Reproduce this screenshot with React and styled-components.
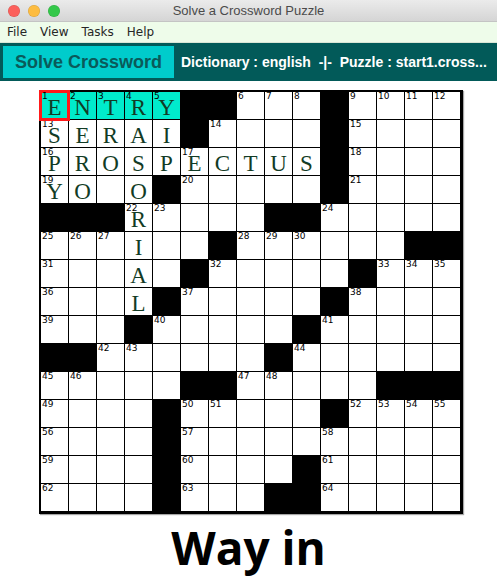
import React from 'react';
import styled, { createGlobalStyle } from 'styled-components';

const GlobalStyle = createGlobalStyle`
    html, body {
        margin: 0;
        padding: 0;
        background: #ffffff;
    }
    body {
        font-family: "Liberation Sans", Arial, sans-serif;
    }
`

const SIZE = 15;

// black squares of the top half, the bottom half is the same rotated
const BLACKS = [
    [0, 5], [0, 6], [0, 10],
    [1, 5], [1, 10],
    [2, 10],
    [3, 4], [3, 10],
    [4, 0], [4, 1], [4, 2], [4, 8], [4, 9],
    [5, 6], [5, 13], [5, 14],
    [6, 5], [6, 11],
    [7, 4], [7, 10],
];

const LETTERS = {
    0: 'ENTRY',
    1: 'SERAI',
    2: 'PROSPECTUS',
    3: 'YO O',
    4: '   R',
    5: '   I',
    6: '   A',
    7: '   L',
};

const buildGrid = () => {
    const grid = [];
    for (let r = 0; r < SIZE; r++) {
        grid.push([]);
        for (let c = 0; c < SIZE; c++) {
            grid[r].push({ black: false, letter: '', number: null });
        }
    }
    BLACKS.forEach(([r, c]) => {
        grid[r][c].black = true;
        grid[SIZE - 1 - r][SIZE - 1 - c].black = true;
    });
    Object.keys(LETTERS).forEach(r => {
        LETTERS[r].split('').forEach((ch, c) => {
            if (ch !== ' ') grid[r][c].letter = ch;
        });
    });
    const isWhite = (r, c) => r >= 0 && c >= 0 && r < SIZE && c < SIZE && !grid[r][c].black;
    let n = 1;
    for (let r = 0; r < SIZE; r++) {
        for (let c = 0; c < SIZE; c++) {
            if (!isWhite(r, c)) continue;
            const across = !isWhite(r, c - 1) && isWhite(r, c + 1);
            const down = !isWhite(r - 1, c) && isWhite(r + 1, c);
            if (across || down) {
                grid[r][c].number = n;
                n++;
            }
        }
    }
    return grid;
}

const Window = styled.div`
    width: 497px;
    height: 577px;
    overflow: hidden;
    display: flex;
    flex-direction: column;
    background: #ffffff;
`
const TitleBar = styled.div`
    height: 22px;
    flex-shrink: 0;
    position: relative;
    display: flex;
    align-items: center;
    justify-content: center;
    background: linear-gradient(#ebebeb, #d5d5d5);
    border-bottom: 1px solid #c4c4c4;
    box-sizing: border-box;
`
const Lights = styled.div`
    position: absolute;
    left: 8px;
    top: 5px;
    display: flex;
    gap: 8px;
`
const Light = styled.span`
    width: 12px;
    height: 12px;
    border-radius: 50%;
    background: ${props => props.color};
    box-shadow: inset 0 0 0 0.5px rgba(0, 0, 0, 0.15);
`
const Title = styled.div`
    font-size: 13px;
    color: #4b4b4b;
`
const MenuBar = styled.ul`
    margin: 0;
    padding: 0 0 0 7px;
    height: 20px;
    flex-shrink: 0;
    display: flex;
    align-items: center;
    gap: 13px;
    list-style: none;
    background: #eefcea;
    border-bottom: 1px solid #d9e6d6;
`
const MenuItem = styled.li`
    font-family: "DejaVu Sans", sans-serif;
    font-size: 12px;
    color: #262626;
`
const ToolBar = styled.div`
    height: 38px;
    flex-shrink: 0;
    display: flex;
    align-items: center;
    gap: 7px;
    padding: 0 3px;
    background: #025a59;
`
const SolveButton = styled.button`
    height: 32px;
    width: 171px;
    flex-shrink: 0;
    border: none;
    padding: 0;
    background: #00cccc;
    color: #0a5a5a;
    font-family: "Liberation Sans", Arial, sans-serif;
    font-weight: bold;
    font-size: 18px;
`
const Status = styled.div`
    color: #ffffff;
    font-family: "Liberation Sans", Arial, sans-serif;
    font-weight: bold;
    font-size: 14px;
    white-space: pre;
    overflow: hidden;
`
const Board = styled.div`
    margin: 9px 0 0 39px;
    align-self: flex-start;
    display: grid;
    grid-template-columns: repeat(15, 27px);
    grid-auto-rows: 27px;
    gap: 1px;
    padding: 2px 3px 3px 2px;
    background: #000000;
    box-shadow: 1px 1px 1px rgba(0, 0, 0, 0.35);
`
const Cell = styled.div`
    position: relative;
    display: flex;
    justify-content: center;
    align-items: flex-start;
    background: ${props => props.black ? '#000000' : props.active ? '#00ebcc' : '#ffffff'};
    outline: ${props => props.selected ? '3px solid #ff1a1a' : 'none'};
    outline-offset: -1px;
    z-index: ${props => props.selected ? 1 : 0};
`
const Number = styled.span`
    position: absolute;
    top: 0;
    left: 1px;
    font-family: "DejaVu Sans", sans-serif;
    font-size: 9px;
    line-height: 9px;
    color: #000000;
`
const Letter = styled.span`
    margin-top: 6px;
    font-family: "Liberation Serif", "Times New Roman", serif;
    font-size: 23px;
    line-height: 19px;
    height: 19px;
    color: #123b25;
`
const Clue = styled.div`
    flex: 1;
    display: flex;
    align-items: center;
    justify-content: center;
    font-family: "Open Sans", sans-serif;
    font-weight: bold;
    font-size: 46px;
    color: #000000;
    padding-top: 2px;
`

const App = () => {
    const grid = buildGrid();

    return (
        <Window>
            <GlobalStyle />
            <TitleBar>
                <Lights>
                    <Light color="#fc605c" />
                    <Light color="#fdbc40" />
                    <Light color="#34c84a" />
                </Lights>
                <Title>Solve a Crossword Puzzle</Title>
            </TitleBar>
            <MenuBar>
                {['File', 'View', 'Tasks', 'Help'].map(item => <MenuItem key={item}>{item}</MenuItem>)}
            </MenuBar>
            <ToolBar>
                <SolveButton>Solve Crossword</SolveButton>
                <Status>{'Dictionary : english  -|-  Puzzle : start1.cross...'}</Status>
            </ToolBar>
            <Board>
                {grid.map((row, r) => row.map((cell, c) => (
                    <Cell
                        key={`${r}-${c}`}
                        black={cell.black}
                        active={r === 0 && c < 5}
                        selected={r === 0 && c === 0}
                    >
                        {cell.number && <Number>{cell.number}</Number>}
                        {cell.letter && <Letter>{cell.letter}</Letter>}
                    </Cell>
                )))}
            </Board>
            <Clue>Way in</Clue>
        </Window>
    );
};

export default App;
